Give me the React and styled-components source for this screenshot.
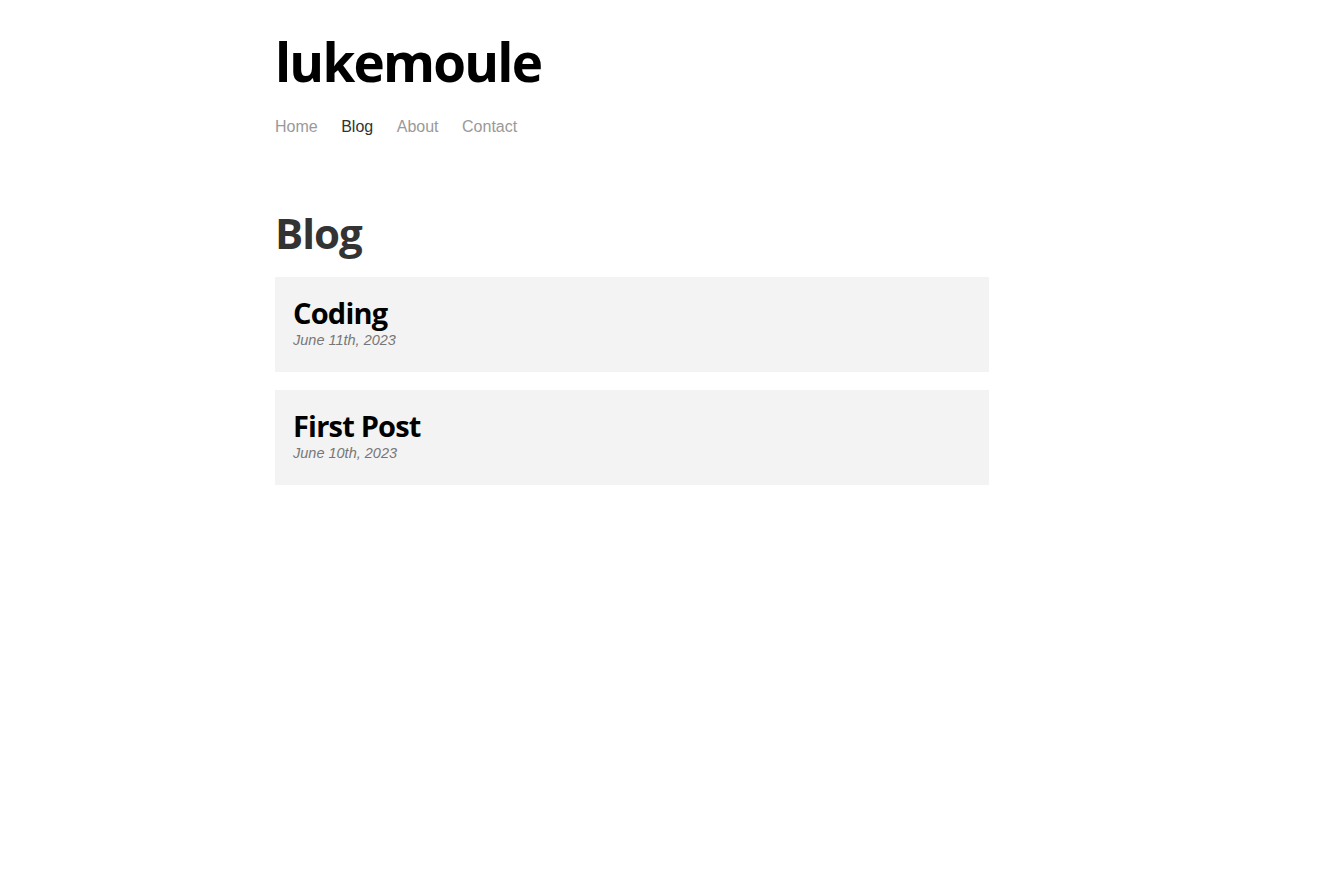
import styled, { createGlobalStyle } from "styled-components";

const GlobalStyle = createGlobalStyle`
  body {
    margin: 0;
    background: #fff;
    font-family: "Liberation Sans", Arial, sans-serif;
  }
`;

const posts = [
  { title: "Coding", date: "June 11th, 2023" },
  { title: "First Post", date: "June 10th, 2023" },
];

const Page = styled.div`
  width: 780px;
  margin: 0 auto;
  padding-top: 28px;
  box-sizing: border-box;
`;

const SiteTitle = styled.h1`
  margin: 0;
  font-family: "Open Sans", sans-serif;
  font-weight: 700;
  font-size: 53px;
  line-height: 68px;
  letter-spacing: -1.8px;
  color: #000;
`;

const Nav = styled.nav`
  display: flex;
  gap: 23.5px;
  margin-top: 21px;
`;

const NavLink = styled.a`
  font-size: 16px;
  line-height: 20px;
  color: ${(p) => (p.$active ? "#333" : "#999")};
  text-decoration: none;
  cursor: pointer;
`;

const Main = styled.main`
  width: 714px;
  margin-top: 70px;
`;

const PageTitle = styled.h2`
  margin: 0 0 18px;
  font-family: "Open Sans", sans-serif;
  font-weight: 700;
  font-size: 42px;
  line-height: 52px;
  letter-spacing: -1px;
  color: #333;
`;

const PostList = styled.div`
  display: flex;
  flex-direction: column;
  gap: 18px;
`;

const PostCard = styled.a`
  display: block;
  background: #f3f3f3;
  padding: 18px 18px 23px;
  text-decoration: none;
  cursor: pointer;
`;

const PostTitle = styled.h3`
  margin: 0;
  font-family: "Open Sans", sans-serif;
  font-weight: 700;
  font-size: 29px;
  line-height: 36px;
  letter-spacing: -0.8px;
  color: #000;
`;

const PostDate = styled.div`
  font-size: 14.5px;
  line-height: 18px;
  font-style: italic;
  color: #777;
`;

export default function App() {
  return (
    <>
      <GlobalStyle />
      <Page>
        <SiteTitle>lukemoule</SiteTitle>
        <Nav>
          <NavLink>Home</NavLink>
          <NavLink $active>Blog</NavLink>
          <NavLink>About</NavLink>
          <NavLink>Contact</NavLink>
        </Nav>
        <Main>
          <PageTitle>Blog</PageTitle>
          <PostList>
            {posts.map((post) => (
              <PostCard key={post.title}>
                <PostTitle>{post.title}</PostTitle>
                <PostDate>{post.date}</PostDate>
              </PostCard>
            ))}
          </PostList>
        </Main>
      </Page>
    </>
  );
}
